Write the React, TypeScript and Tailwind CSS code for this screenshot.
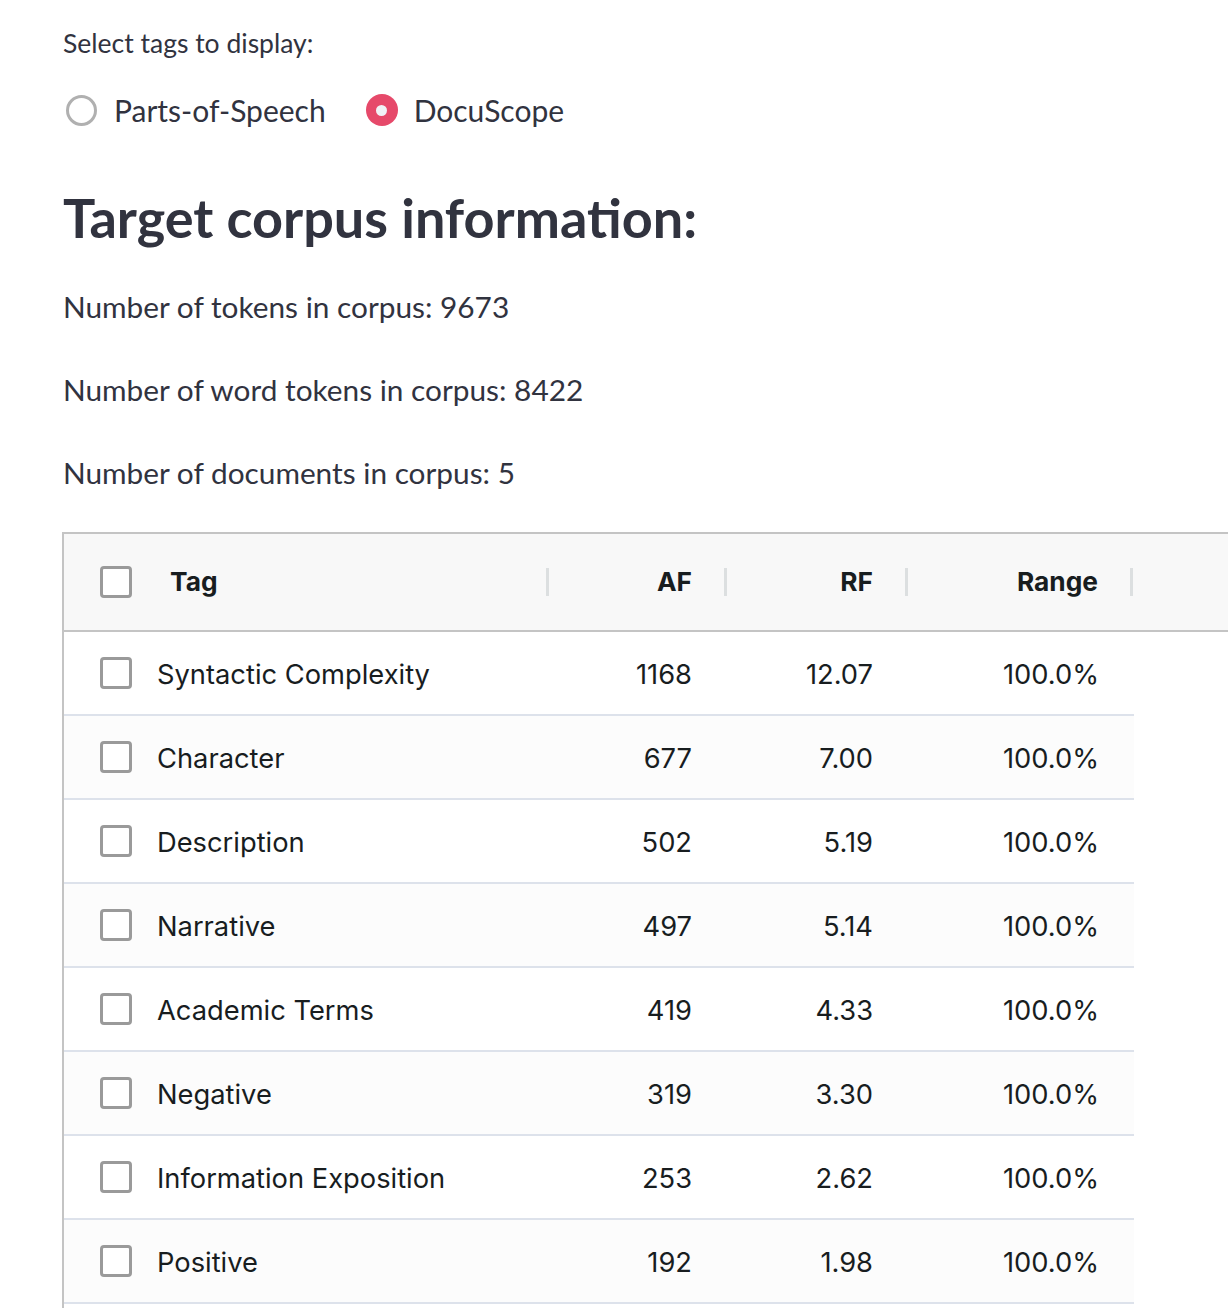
import React from "react";

const rows = [
  ["Syntactic Complexity", "1168", "12.07"],
  ["Character", "677", "7.00"],
  ["Description", "502", "5.19"],
  ["Narrative", "497", "5.14"],
  ["Academic Terms", "419", "4.33"],
  ["Negative", "319", "3.30"],
  ["Information Exposition", "253", "2.62"],
  ["Positive", "192", "1.98"],
];

const st = { fontFamily: "Lato, 'Noto Sans', sans-serif" };
const tf = { fontFamily: "Inter, 'Liberation Sans', sans-serif" };

function Box() {
  return <div className="w-[32px] h-[32px] shrink-0 rounded-[4px] border-[3px] border-[#9a9a9a] bg-white" />;
}

function Sep() {
  return <div className="w-[3px] h-[28px] bg-[#dcdfe0] shrink-0" />;
}

export default function App() {
  return (
    <div className="w-[1228px] h-[1308px] overflow-hidden bg-white text-[#31333f]" style={st}>
      <div className="pl-[63px] pt-[26px]">
        <div className="h-[36px] flex items-center text-[26.5px]">Select tags to display:</div>
        <div className="mt-[30px] h-[36px] flex items-center pl-[3px] text-[30px]">
          <div className="w-[31px] h-[31px] rounded-full border-[3px] border-[#b0b0b0]" />
          <span className="ml-[17px] mr-[40px]">Parts-of-Speech</span>
          <div className="w-[32px] h-[32px] rounded-full bg-[#e6496a] flex items-center justify-center">
            <div className="w-[11px] h-[11px] rounded-full bg-[#f0f2f6]" />
          </div>
          <span className="ml-[16px]">DocuScope</span>
        </div>
        <div className="mt-[59px] h-[60px] flex items-center text-[54px] font-bold">Target corpus information:</div>
        <div className="mt-[40px] h-[40px] flex items-center text-[29.8px]">Number of tokens in corpus: 9673</div>
        <div className="mt-[43px] h-[40px] flex items-center text-[29.8px]">Number of word tokens in corpus: 8422</div>
        <div className="mt-[43px] h-[40px] flex items-center text-[29.8px]">Number of documents in corpus: 5</div>
        <div className="mt-[39px] -ml-[1px] w-[1300px] border-t-2 border-l-2 border-[#c4c4c4] text-[#181d1f]" style={tf}>
          <div className="h-[98px] bg-[#f8f8f8] border-b-2 border-[#c4c4c4] flex text-[26.3px] font-bold">
            <div className="w-[486px] flex items-center pl-[36px] pr-[1px]">
              <Box />
              <span className="ml-[38px]">Tag</span>
              <div className="ml-auto"><Sep /></div>
            </div>
            <div className="w-[178px] flex items-center justify-end pr-[1px]">
              <span>AF</span>
              <div className="ml-[32px]"><Sep /></div>
            </div>
            <div className="w-[181px] flex items-center justify-end pr-[1px]">
              <span>RF</span>
              <div className="ml-[32px]"><Sep /></div>
            </div>
            <div className="w-[225px] flex items-center justify-end pr-[1px]">
              <span>Range</span>
              <div className="ml-[32px]"><Sep /></div>
            </div>
          </div>
          {rows.map((r, i) => (
            <div
              key={r[0]}
              className={`w-[1070px] h-[84px] border-b-2 border-[#dde2eb] flex text-[27.3px] ${i % 2 === 1 ? "bg-[#fcfcfc]" : "bg-white"}`}
            >
              <div className="w-[486px] flex items-center pl-[36px]">
                <Box />
                <span className="ml-[25px] pt-[4px]">{r[0]}</span>
              </div>
              <div className="w-[178px] flex items-center justify-end pr-[36px] pt-[4px]">{r[1]}</div>
              <div className="w-[181px] flex items-center justify-end pr-[36px] pt-[4px]">{r[2]}</div>
              <div className="w-[225px] flex items-center justify-end pr-[35px] pt-[4px]">100.0%</div>
            </div>
          ))}
          <div className="w-[1070px] h-[84px] bg-white" />
        </div>
      </div>
    </div>
  );
}
